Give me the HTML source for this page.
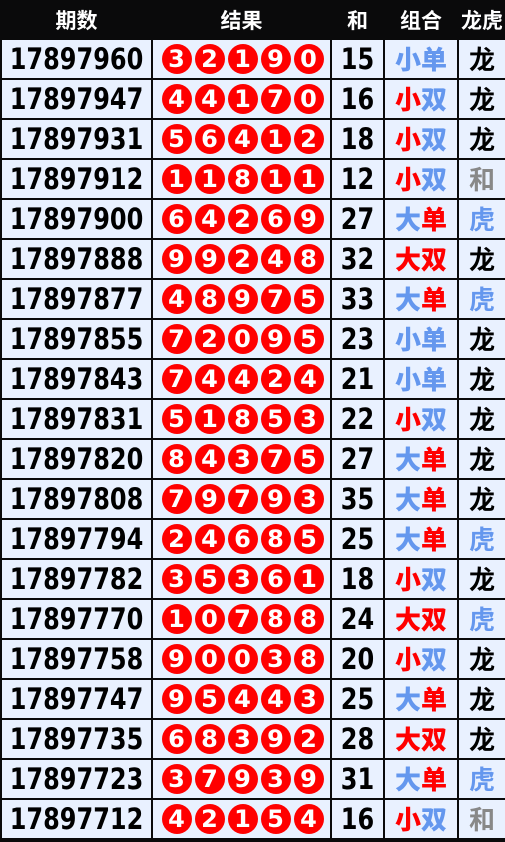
<!DOCTYPE html><html><head><meta charset="utf-8"><style>
*{margin:0;padding:0;box-sizing:border-box}
body{width:505px;height:840px;background:#0a0a0b;overflow:hidden;font-family:"DejaVu Sans","Noto Sans CJK SC",sans-serif;font-weight:bold}
.h{position:absolute;top:0;height:40px;color:#fff;font-size:21px;line-height:40px;text-align:center;font-family:"Noto Sans CJK SC",sans-serif}
.g{position:absolute;top:40px;left:2px;display:grid;grid-template-columns:149px 177px 51px 72px 46px;grid-auto-rows:38px;gap:2px}
.g div{background:#e9f1ff;text-align:center;line-height:38px}
.n,.s{font-size:24px;color:#000;transform:scaleY(1.22);background:transparent!important}
.n{position:relative}
.c,.d{font-size:26px;font-family:"Noto Sans CJK SC",sans-serif}
.b{display:flex;justify-content:center;align-items:center;gap:3px;padding-left:2px}
.b span{width:30px;height:30px;border-radius:50%;background:#f00;color:#fff;font-size:24px;line-height:30px;text-align:center;display:inline-block}
.r{color:#f00}.u{color:#6497ee}.k{color:#000}.y{color:#888}
.w{background:#e9f1ff}
</style></head><body>
<div class="h" style="left:0;width:153px">期数</div>
<div class="h" style="left:153px;width:177px">结果</div>
<div class="h" style="left:332px;width:51px">和</div>
<div class="h" style="left:385px;width:72px">组合</div>
<div class="h" style="left:459px;width:46px">龙虎</div>
<div class="g">
<div><div class="n">17897960</div></div><div class="b"><span>3</span><span>2</span><span>1</span><span>9</span><span>0</span></div><div><div class="s">15</div></div><div class="c"><b class="u">小单</b></div><div class="d k">龙</div>
<div><div class="n">17897947</div></div><div class="b"><span>4</span><span>4</span><span>1</span><span>7</span><span>0</span></div><div><div class="s">16</div></div><div class="c"><b class="r">小</b><b class="u">双</b></div><div class="d k">龙</div>
<div><div class="n">17897931</div></div><div class="b"><span>5</span><span>6</span><span>4</span><span>1</span><span>2</span></div><div><div class="s">18</div></div><div class="c"><b class="r">小</b><b class="u">双</b></div><div class="d k">龙</div>
<div><div class="n">17897912</div></div><div class="b"><span>1</span><span>1</span><span>8</span><span>1</span><span>1</span></div><div><div class="s">12</div></div><div class="c"><b class="r">小</b><b class="u">双</b></div><div class="d y">和</div>
<div><div class="n">17897900</div></div><div class="b"><span>6</span><span>4</span><span>2</span><span>6</span><span>9</span></div><div><div class="s">27</div></div><div class="c"><b class="u">大</b><b class="r">单</b></div><div class="d u">虎</div>
<div><div class="n">17897888</div></div><div class="b"><span>9</span><span>9</span><span>2</span><span>4</span><span>8</span></div><div><div class="s">32</div></div><div class="c"><b class="r">大双</b></div><div class="d k">龙</div>
<div><div class="n">17897877</div></div><div class="b"><span>4</span><span>8</span><span>9</span><span>7</span><span>5</span></div><div><div class="s">33</div></div><div class="c"><b class="u">大</b><b class="r">单</b></div><div class="d u">虎</div>
<div><div class="n">17897855</div></div><div class="b"><span>7</span><span>2</span><span>0</span><span>9</span><span>5</span></div><div><div class="s">23</div></div><div class="c"><b class="u">小单</b></div><div class="d k">龙</div>
<div><div class="n">17897843</div></div><div class="b"><span>7</span><span>4</span><span>4</span><span>2</span><span>4</span></div><div><div class="s">21</div></div><div class="c"><b class="u">小单</b></div><div class="d k">龙</div>
<div><div class="n">17897831</div></div><div class="b"><span>5</span><span>1</span><span>8</span><span>5</span><span>3</span></div><div><div class="s">22</div></div><div class="c"><b class="r">小</b><b class="u">双</b></div><div class="d k">龙</div>
<div><div class="n">17897820</div></div><div class="b"><span>8</span><span>4</span><span>3</span><span>7</span><span>5</span></div><div><div class="s">27</div></div><div class="c"><b class="u">大</b><b class="r">单</b></div><div class="d k">龙</div>
<div><div class="n">17897808</div></div><div class="b"><span>7</span><span>9</span><span>7</span><span>9</span><span>3</span></div><div><div class="s">35</div></div><div class="c"><b class="u">大</b><b class="r">单</b></div><div class="d k">龙</div>
<div><div class="n">17897794</div></div><div class="b"><span>2</span><span>4</span><span>6</span><span>8</span><span>5</span></div><div><div class="s">25</div></div><div class="c"><b class="u">大</b><b class="r">单</b></div><div class="d u">虎</div>
<div><div class="n">17897782</div></div><div class="b"><span>3</span><span>5</span><span>3</span><span>6</span><span>1</span></div><div><div class="s">18</div></div><div class="c"><b class="r">小</b><b class="u">双</b></div><div class="d k">龙</div>
<div><div class="n">17897770</div></div><div class="b"><span>1</span><span>0</span><span>7</span><span>8</span><span>8</span></div><div><div class="s">24</div></div><div class="c"><b class="r">大双</b></div><div class="d u">虎</div>
<div><div class="n">17897758</div></div><div class="b"><span>9</span><span>0</span><span>0</span><span>3</span><span>8</span></div><div><div class="s">20</div></div><div class="c"><b class="r">小</b><b class="u">双</b></div><div class="d k">龙</div>
<div><div class="n">17897747</div></div><div class="b"><span>9</span><span>5</span><span>4</span><span>4</span><span>3</span></div><div><div class="s">25</div></div><div class="c"><b class="u">大</b><b class="r">单</b></div><div class="d k">龙</div>
<div><div class="n">17897735</div></div><div class="b"><span>6</span><span>8</span><span>3</span><span>9</span><span>2</span></div><div><div class="s">28</div></div><div class="c"><b class="r">大双</b></div><div class="d k">龙</div>
<div><div class="n">17897723</div></div><div class="b"><span>3</span><span>7</span><span>9</span><span>3</span><span>9</span></div><div><div class="s">31</div></div><div class="c"><b class="u">大</b><b class="r">单</b></div><div class="d u">虎</div>
<div><div class="n">17897712</div></div><div class="b"><span>4</span><span>2</span><span>1</span><span>5</span><span>4</span></div><div><div class="s">16</div></div><div class="c"><b class="r">小</b><b class="u">双</b></div><div class="d y">和</div>
</div>
</body></html>
